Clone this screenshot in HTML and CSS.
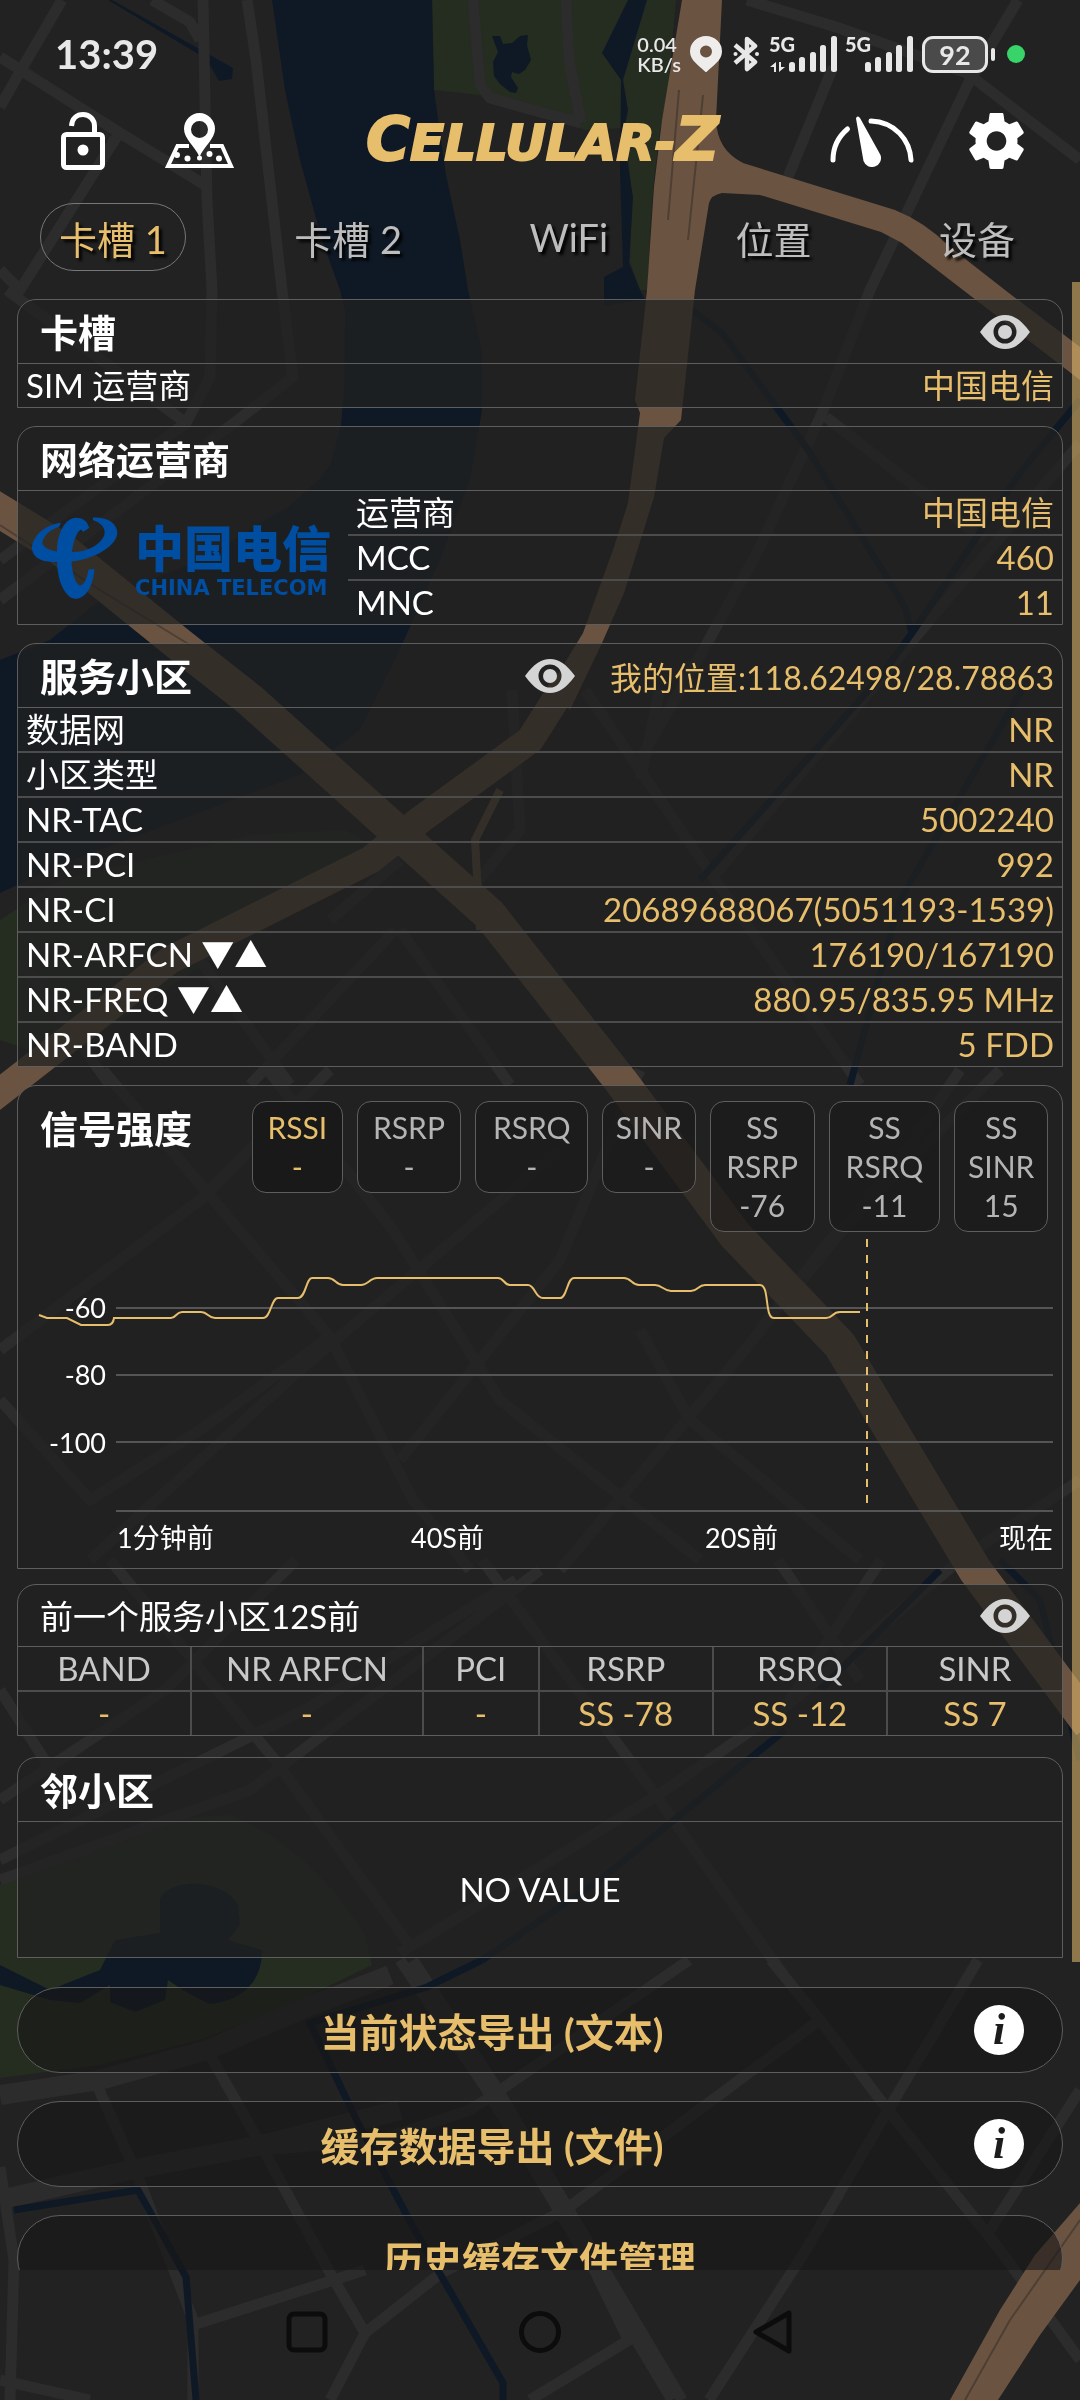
FILE: index.html
```
<!DOCTYPE html>
<html lang="zh-CN">
<head>
    <meta charset="UTF-8">
    <meta name="viewport" content="width=device-width, initial-scale=1.0">
    <title>Cellular-Z</title>
    <link rel="stylesheet" href="styles.css">
</head>
<body>
    <!-- dark city map behind everything -->
    <svg class="map" viewBox="0 0 1080 2400" preserveAspectRatio="xMidYMid slice" aria-hidden="true">
        <g fill="#252c20">
            <path d="M432 0H676L668 90L660 130L654 180L650 230L648 290H640L630 262L632 200L626 128L585 130L540 115L480 95L434 90Z"/>
            <path d="M0 920L60 880L250 835L345 830L380 850L300 900L150 1000L60 1060L0 1040Z"/>
            <path d="M0 1885C80 1850 160 1815 230 1815C290 1840 330 1880 365 1935L372 1965L290 2005L200 2040L100 2065L0 2078Z"/>
        </g>
        <g fill="#0f1926">
            <path d="M272 0L285 90L300 160L322 240L340 290L345 310L344 390L341 425L330 465L318 480L290 505L200 560L100 600L50 640L0 660V893L60 865L180 820L300 775L360 730L395 660L440 560L470 480L482 410V350L468 290L460 240L446 175L434 90L432 0Z"/>
            <path d="M628 0H647L623 80L628 110L625 125L626 153L633 197L629 263L640 290L645 300L604 306V277L623 267L620 170L621 80L602 53Z"/>
            <path d="M492 36L500 36L503 44L512 43L520 36L528 35L527 45L531 60L525 70L519 74L512 72L511 77L518 88L516 93L510 92L500 84L494 76L493 62L498 52Z"/>
            <path d="M112 0L233 68L232 79L219 81L208 62L200 55L108 0Z"/>
            <path d="M0 1965L50 1990L100 1970L115 1940L160 1933V1900C165 1880 220 1875 238 1905L240 1925L228 1940L262 1950C262 1980 245 2000 210 2004C190 1995 175 1985 168 1980L165 2000L135 2012L110 2002V1985L80 2003L50 2000L0 1985Z"/>
        </g>
        <!-- small streets -->
        <g fill="none" stroke="#2c2c2c" stroke-width="11" stroke-linejoin="round">
            <path d="M62 0L21 70L0 107M0 57L120 133L205 185M203 0L207 200L212 290L210 377L186 423L7 290M152 0L190 22L200 40M119 133L20 290L0 270"/>
            <path d="M247 0L256 60L282 290L293 377L234 423L0 600M473 0L480 85L490 98L540 112L581 123M566 0L569 60L581 123M0 560L186 423"/>
            <path d="M747 0L836 27L967 73L1080 160M1018 0L970 80L870 290L822 413L760 547L705 647L640 760M833 67L788 177M826 417L984 540M1080 443L930 620L713 877"/>
            <path d="M512 690L520 830L470 890M585 690L713 877L860 1085M660 690L640 780M400 860L330 920M110 1085L20 960M200 960L290 1085M395 930L250 1085M400 930L510 1085"/>
            <path d="M103 1070L330 1337L413 1500L470 1570M268 1070L393 1230L500 1400L700 1560M0 1350L200 1200L330 1070M90 1560L300 1370L560 1150M400 1460L560 1260L640 1070M0 1400L90 1500L200 1430L330 1337M560 1570L720 1380L900 1160L960 1070"/>
            <path d="M640 1330L690 1420L860 1560M1000 1070L830 1240L760 1330M1080 1480L960 1560L785 1707"/>
            <path d="M785 1707L661 1793L400 1953M516 1580L310 1707L0 1860M296 1560L165 1690L0 1800M110 1560L275 1760L413 1950M482 1560L654 1793L785 1977M881 1560L785 1707M778 1560L860 1680M0 1690L70 1800M540 1570L250 1790L0 1880"/>
            <path d="M207 2050L262 2147L330 2273L365 2333M413 1960L496 2087L682 2400M400 1960L485 2087L672 2400M689 1960L496 2093L470 2110L380 2140L262 2150M820 2020L565 2210L441 2273L365 2333L330 2400M771 1960L820 2020L888 2110L1000 2250L1080 2360M978 1960L888 2110L806 2250L709 2400"/>
            <path d="M138 2177L193 2320V2400M96 2083L138 2177M0 2167L14 2260L10 2400M634 2337L530 2400M565 2210L627 2337M365 2270L193 2325M0 2380L90 2400M1080 2090L990 2230"/>
        </g>
        <g fill="none" stroke="#2c2c2c" stroke-width="20">
            <path d="M0 2095L100 2080L207 2050L300 2010L390 1975M0 2200L130 2170L262 2145L400 2110"/>
        </g>
        <g fill="none" stroke="#0f1926" stroke-width="7">
            <path d="M692 310L722 333L808 450L905 607L912 633M1080 400L1022 470L912 633L880 677L700 880M1022 690L900 900L850 1085"/>
            <path d="M482 1960L427 1987L310 2023L358 2123L413 2227L503 2383V2400M14 2210L138 2190L186 2277L196 2400M785 1730L600 1880L482 1960M1000 1560L1040 1600L1080 1760M940 1570L820 1690"/>
        </g>
        <!-- main roads -->
        <g fill="#6b5341">
            <path d="M682 0H722L716 120Q717 150 743 163L895 210Q925 222 950 247L1005 290L1080 347V380L963 290L902 243L881 232L760 195L722 193Q711 195 709 203L695 290L681 420L664 438L654 497L624 593L602 643L570 710L552 684L583 633L614 547L628 503L640 413L635 400L647 290L654 187L662 120Z"/>
            <path d="M1080 2203L1035 2255L1000 2310L950 2400H998L1040 2335L1080 2280Z"/>
        </g>
        <g fill="none" stroke="#6b5341" stroke-linejoin="round">
            <path stroke-width="28" d="M568 680L530 740L420 820L370 860L170 960L-10 1100"/>
            <path stroke-width="34" d="M-10 505L60 548L180 645L250 700L395 830L490 915L620 1080L735 1235L840 1345L975 1570L1090 1725"/>
            <path stroke-width="8" d="M500 790L475 840L480 930"/>
        </g>
        <path fill="none" stroke="#4d3f33" stroke-width="2" d="M679 90L668 220M703 95L688 240M0 525L100 590L190 645M1080 2220L1010 2320L965 2400"/>
    </svg>

    <svg class="sprite" aria-hidden="true">
        <symbol id="eye" viewBox="0 0 50 34">
            <path fill="#d4d4d4" fill-rule="evenodd" d="M0 17C9 5 16 0 25 0S41 5 50 17C41 29 34 34 25 34S9 29 0 17ZM25 5.500A11.500 11.500 0 1 0 25 28.500A11.500 11.500 0 1 0 25 5.500Z"/>
            <circle cx="25" cy="17" r="7" fill="#d4d4d4"/>
        </symbol>
        <symbol id="bars" viewBox="0 0 67 36">
            <g fill="#e8e8e8">
                <rect x="19" y="26" width="6" height="10" rx="2.500"/>
                <rect x="29" y="21" width="6" height="15" rx="2.500"/>
                <rect x="40" y="16" width="6" height="20" rx="2.500"/>
                <rect x="50" y="9" width="6" height="27" rx="2.500"/>
                <rect x="61" y="0" width="6" height="36" rx="2.500"/>
            </g>
        </symbol>
    </svg>

    <div class="app">
        <div class="status">
            <span class="time">13:39</span>
            <div class="status-icons">
                <span class="speed">0.04<br>KB/s</span>
                <svg width="32" height="36" viewBox="0 0 32 36"><path fill="#efedec" fill-rule="evenodd" d="M16 0A16 15.500 0 0 1 32 15.500C32 25 22 30 16 36.500C10 30 0 25 0 15.500A16 15.500 0 0 1 16 0ZM16 9.500A6 6 0 1 0 16 21.500A6 6 0 1 0 16 9.500Z"/></svg>
                <svg class="bt" width="26" height="36" viewBox="0 0 26 36"><path fill="none" stroke="#e8e8e8" stroke-width="4.500" stroke-linejoin="round" d="M2 9L22 26L14 33V3L22 10L2 27"/><circle cx="2.500" cy="18" r="2" fill="#e8e8e8"/><circle cx="24" cy="18" r="2" fill="#e8e8e8"/></svg>
                <svg class="sim" width="67" height="36" viewBox="0 0 67 36"><use href="#bars"/><text class="net" x="-1" y="16">5G</text><path fill="#e8e8e8" d="M0 31L6 26V36H4V31ZM9 26V36L15 31H11V26Z"/></svg>
                <svg class="sim" width="67" height="36" viewBox="0 0 67 36"><use href="#bars"/><text class="net" x="-1" y="16">5G</text></svg>
                <div class="battery">92</div>
                <span class="mic-dot"></span>
            </div>
        </div>

        <header class="toolbar">
            <div class="tools">
                <button class="icon-btn" aria-label="锁定">
                    <svg width="44" height="58" viewBox="0 0 44 58"><rect x="2.500" y="22.500" width="39" height="33" rx="3" fill="none" stroke="#fff" stroke-width="5"/><path fill="none" stroke="#fff" stroke-width="5" d="M10.500 14C11 6 16 2.500 22 2.500C29 2.500 33.500 8 33.500 14V22"/><circle cx="22" cy="38" r="5.500" fill="#fff"/></svg>
                </button>
                <button class="icon-btn" aria-label="地图">
                    <svg width="70" height="56" viewBox="0 0 70 56">
                        <path fill="none" stroke="#fff" stroke-width="4" d="M24 33H12.500L3 53H66L57 33H45"/>
                        <path fill="#fff" fill-rule="evenodd" d="M34.500 0A15.500 16 0 0 1 50 16C50 26 39 33 34.500 44C30 33 19 26 19 16A15.500 16 0 0 1 34.500 0ZM34.500 8A8.500 8.500 0 1 0 34.500 25A8.500 8.500 0 1 0 34.500 8Z"/>
                        <g fill="#fff"><circle cx="12" cy="42" r="3"/><circle cx="22.500" cy="45.500" r="3"/><circle cx="34.500" cy="45" r="2.500"/><circle cx="44.500" cy="41" r="3"/><circle cx="54" cy="45.500" r="3"/></g>
                    </svg>
                </button>
            </div>
            <h1 class="logo"><span class="cap">C</span>ELLULAR-<span class="cap">Z</span></h1>
            <div class="tools right">
                <button class="icon-btn" aria-label="测速">
                    <svg width="84" height="52" viewBox="0 0 84 52"><path fill="none" stroke="#fff" stroke-width="5" stroke-linecap="round" d="M3 45C3 32 8 22 17.500 14M41 6C65 7 80 25 81 45"/><path fill="#fff" d="M26 3.500Q27 0 30 3L50.500 40A9 9 0 1 1 33.500 46Z"/></svg>
                </button>
                <button class="icon-btn" aria-label="设置">
                    <svg width="55" height="56" viewBox="2.200 2 19.600 20"><path fill="#fff" d="M19.430 12.980c.04-.32.07-.64.07-.98s-.03-.66-.07-.98l2.110-1.650c.19-.15.24-.42.12-.64l-2-3.460c-.12-.22-.39-.3-.61-.22l-2.490 1c-.52-.4-1.080-.73-1.690-.98l-.38-2.650C14.460 2.180 14.250 2 14 2h-4c-.25 0-.46.18-.49.42l-.38 2.650c-.61.25-1.170.59-1.690.98l-2.490-1c-.23-.09-.49 0-.61.22l-2 3.460c-.13.22-.07.49.12.64l2.110 1.650c-.04.32-.07.65-.07.98s.03.66.07.98l-2.110 1.650c-.19.15-.24.42-.12.64l2 3.460c.12.22.39.3.61.22l2.490-1c.52.4 1.080.73 1.690.98l.38 2.650c.03.24.24.42.49.42h4c.25 0 .46-.18.49-.42l.38-2.650c.61-.25 1.170-.59 1.690-.98l2.490 1c.23.09.49 0 .61-.22l2-3.460c.12-.22.07-.49-.12-.64l-2.110-1.650zM12 15.500c-1.930 0-3.500-1.570-3.500-3.500s1.570-3.500 3.500-3.500 3.500 1.570 3.500 3.500-1.570 3.500-3.500 3.500z"/></svg>
                </button>
            </div>
        </header>

        <nav class="tabs">
            <button class="tab active">卡槽 1</button>
            <button class="tab">卡槽 2</button>
            <button class="tab">WiFi</button>
            <button class="tab">位置</button>
            <button class="tab">设备</button>
        </nav>

        <main class="content">
            <section class="panel">
                <div class="panel-head">
                    <h2>卡槽</h2>
                    <button class="icon-btn eye" aria-label="显示"><svg width="50" height="34"><use href="#eye"/></svg></button>
                </div>
                <table class="rows">
                    <tr><th scope="row">SIM 运营商</th><td>中国电信</td></tr>
                </table>
            </section>

            <section class="panel">
                <div class="panel-head"><h2>网络运营商</h2></div>
                <div class="operator">
                    <div class="carrier">
                        <svg width="87" height="84" viewBox="30 48 262 252" aria-hidden="true">
                            <g fill="#004ea2">
                                <path d="M120 68C70 75 33 110 33 145C35 180 75 188 110 186C200 190 285 145 290 100C290 70 262 50 216 52L217 60C240 66 258 85 250 108C235 140 190 158 150 156C110 158 72 150 64 130C66 105 90 88 115 80Z"/>
                                <path d="M165 53C135 55 115 90 109 135C105 190 110 240 130 272C142 290 152 297 166 297C198 294 218 255 221 207L203 209C200 235 188 258 177 257C162 250 153 215 152 180C152 140 165 95 181 88L187 96L205 84C200 62 185 53 165 53Z"/>
                            </g>
                        </svg>
                        <div class="carrier-name">
                            <span class="zh">中国电信</span>
                            <span class="en">CHINA TELECOM</span>
                        </div>
                    </div>
                    <table class="rows">
                        <tr><th scope="row">运营商</th><td>中国电信</td></tr>
                        <tr><th scope="row">MCC</th><td>460</td></tr>
                        <tr><th scope="row">MNC</th><td>11</td></tr>
                    </table>
                </div>
            </section>

            <section class="panel">
                <div class="panel-head">
                    <h2>服务小区</h2>
                    <button class="icon-btn eye-mid" aria-label="显示"><svg width="50" height="34"><use href="#eye"/></svg></button>
                    <span class="position">我的位置:118.62498/28.78863</span>
                </div>
                <table class="rows">
                    <tr><th scope="row">数据网</th><td>NR</td></tr>
                    <tr><th scope="row">小区类型</th><td>NR</td></tr>
                    <tr><th scope="row">NR-TAC</th><td>5002240</td></tr>
                    <tr><th scope="row">NR-PCI</th><td>992</td></tr>
                    <tr><th scope="row">NR-CI</th><td>20689688067(5051193-1539)</td></tr>
                    <tr><th scope="row">NR-ARFCN ▼▲</th><td>176190/167190</td></tr>
                    <tr><th scope="row">NR-FREQ ▼▲</th><td>880.95/835.95 MHz</td></tr>
                    <tr><th scope="row">NR-BAND</th><td>5 FDD</td></tr>
                </table>
            </section>

            <section class="panel signal">
                <div class="signal-head">
                    <h2>信号强度</h2>
                    <div class="chips">
                        <button class="chip active">RSSI<br>-</button>
                        <button class="chip">RSRP<br>-</button>
                        <button class="chip">RSRQ<br>-</button>
                        <button class="chip">SINR<br>-</button>
                        <button class="chip">SS<br>RSRP<br>-76</button>
                        <button class="chip">SS<br>RSRQ<br>-11</button>
                        <button class="chip">SS<br>SINR<br>15</button>
                    </div>
                </div>
                <svg class="chart" viewBox="0 0 1044 336">
                    <path class="grid-line" d="M98 76H1035M98 143H1035M98 210H1035M98 279H1035"/>
                    <path class="now" d="M849 7V272"/>
                    <path class="series" d="M21 83L29 86H49L63 93H90Q95 93 96 86H153C158 86 158 80 164 80H183C190 80 190 86 197 86H245C253 86 253 66 260 66H280C288 66 288 46 294 46H310C317 46 318 53 325 53H343C350 53 352 46 359 46H480C486 46 486 53 492 53H510C517 53 517 66 525 66H542C549 66 549 46 556 46H606C613 46 614 53 621 53H637C644 53 646 59 653 59H673C680 59 680 53 687 53H742C752 53 746 86 756 86H808C815 86 814 80 822 80H842"/>
                    <g class="axis" text-anchor="end">
                        <text x="88" y="86">-60</text>
                        <text x="88" y="153">-80</text>
                        <text x="88" y="221">-100</text>
                    </g>
                    <g class="axis">
                        <text x="99" y="316">1分钟前</text>
                        <text x="393" y="316">40S前</text>
                        <text x="687" y="316">20S前</text>
                        <text x="1035" y="316" text-anchor="end">现在</text>
                    </g>
                </svg>
            </section>

            <section class="panel previous">
                <div class="panel-head">
                    <h2 class="light">前一个服务小区12S前</h2>
                    <button class="icon-btn eye" aria-label="显示"><svg width="50" height="34"><use href="#eye"/></svg></button>
                </div>
                <table class="cells">
                    <tr><th>BAND</th><th class="wide">NR ARFCN</th><th class="narrow">PCI</th><th>RSRP</th><th>RSRQ</th><th>SINR</th></tr>
                    <tr><td>-</td><td>-</td><td>-</td><td>SS -78</td><td>SS -12</td><td>SS 7</td></tr>
                </table>
            </section>

            <section class="panel">
                <div class="panel-head"><h2>邻小区</h2></div>
                <p class="empty">NO VALUE</p>
            </section>

            <div class="exports">
                <div class="export">
                    <button class="export-btn">当前状态导出 (文本)</button>
                    <button class="info" aria-label="说明">i</button>
                </div>
                <div class="export">
                    <button class="export-btn">缓存数据导出 (文件)</button>
                    <button class="info" aria-label="说明">i</button>
                </div>
                <div class="export">
                    <button class="export-btn">历史缓存文件管理</button>
                </div>
            </div>
            <div class="scrollbar"></div>
        </main>

        <footer class="navbar">
            <button class="icon-btn" aria-label="最近任务"><svg width="42" height="44" viewBox="0 0 42 44"><rect x="3" y="4" width="36" height="36" rx="5" fill="none" stroke="#0c0c0c" stroke-width="5"/></svg></button>
            <button class="icon-btn" aria-label="主页"><svg width="42" height="44" viewBox="0 0 42 44"><circle cx="21" cy="22" r="18.500" fill="none" stroke="#0c0c0c" stroke-width="5"/></svg></button>
            <button class="icon-btn" aria-label="返回"><svg width="42" height="44" viewBox="0 0 42 44"><path d="M37 3V41L4 22Z" fill="none" stroke="#0c0c0c" stroke-width="5" stroke-linejoin="round"/></svg></button>
        </footer>
    </div>
</body>
</html>
```
FILE: styles.css
```
* {
    box-sizing: border-box;
}
body {
    margin: 0;
    background: #222;
    color: #fff;
    font-family: Lato, "Noto Sans CJK SC", sans-serif;
    font-size: 33px;
}
button {
    font: inherit;
    color: inherit;
    background: none;
    border: none;
    padding: 0;
    cursor: pointer;
}
svg {
    display: block;
}
h1, h2, p {
    margin: 0;
}
.map {
    position: fixed;
    inset: 0;
    width: 100%;
    height: 100%;
    z-index: -1;
}
.sprite {
    position: absolute;
    width: 0;
    height: 0;
}
.app {
    display: flex;
    flex-direction: column;
    height: 100vh;
}

/* status bar */
.status {
    display: flex;
    justify-content: space-between;
    align-items: center;
    height: 108px;
    padding: 0 55px;
    color: #e8e8e8;
}
.time {
    font-size: 40px;
    font-weight: 700;
}
.status-icons {
    display: flex;
    align-items: center;
    gap: 9px;
}
.speed {
    font-size: 20px;
    line-height: 20px;
    font-weight: 600;
}
.bt {
    margin: 0 2px;
}
.sim {
    overflow: visible;
}
.net {
    font-size: 20px;
    font-weight: 900;
    fill: #e8e8e8;
}
.battery {
    position: relative;
    width: 66px;
    height: 37px;
    border: 3px solid #e8e8e8;
    border-radius: 11px;
    background: #4a4a4a;
    text-align: center;
    font-size: 27px;
    line-height: 31px;
    font-weight: 700;
    margin-right: 10px;
}
.battery::after {
    content: "";
    position: absolute;
    right: -10px;
    top: 9px;
    width: 4px;
    height: 13px;
    border-radius: 2px;
    background: #e8e8e8;
}
.mic-dot {
    width: 18px;
    height: 18px;
    border-radius: 50%;
    background: #38d369;
}

/* toolbar */
.toolbar {
    display: flex;
    align-items: center;
    height: 66px;
    padding: 0 56px 0 61px;
}
.tools {
    flex: 1;
    display: flex;
    align-items: center;
    gap: 60px;
}
.tools.right {
    justify-content: flex-end;
    gap: 55px;
}
.logo {
    color: #e7be6b;
    font-family: "DejaVu Sans", sans-serif;
    font-style: italic;
    font-weight: 700;
    font-size: 50px;
    line-height: 60px;
    -webkit-text-stroke: 2px #e7be6b;
}
.logo .cap {
    font-size: 60px;
}

/* tabs */
.tabs {
    display: flex;
    justify-content: space-between;
    padding: 29px 46px 11px 40px;
}
.tab {
    height: 68px;
    padding: 0 18px;
    border: 1px solid transparent;
    border-radius: 34px;
    font-size: 38px;
    color: #bdbdbd;
    text-shadow: 3px 3px 3px #000;
}
.tab.active {
    color: #e7be6b;
    border-color: #777;
}

/* scrolling content */
.content {
    position: relative;
    flex: 1;
    min-height: 0;
    overflow: hidden;
    padding: 17px 17px 0;
}
.scrollbar {
    position: absolute;
    top: 0;
    right: 0;
    width: 8px;
    height: 1680px;
    background: rgba(231, 190, 107, 0.55);
}
.panel {
    border: 1px solid #5e5e5e;
    border-radius: 19px 19px 0 0;
    background: rgba(34, 34, 34, 0.75);
    margin-bottom: 18px;
}
.panel-head {
    display: flex;
    align-items: center;
    height: 64px;
    padding: 0 8px 0 22px;
    border-bottom: 1px solid #5e5e5e;
}
h2 {
    flex: 1;
    font-size: 38px;
    font-weight: 700;
    line-height: 64px;
}
h2.light {
    font-size: 33px;
    font-weight: 400;
}
.eye {
    margin-right: 24px;
}
.eye-mid {
    margin-right: 35px;
}
.position {
    color: #e7be6b;
    font-size: 32px;
}
.rows {
    width: 100%;
    border-spacing: 0;
    line-height: 43px;
}
.rows th, .rows td {
    padding: 0 8px;
    border-bottom: 2px solid #4c4c4c;
    font-weight: 400;
    text-align: left;
}
.rows td {
    color: #e7be6b;
    text-align: right;
}
.rows tr:last-child th, .rows tr:last-child td {
    border-bottom: none;
}
.operator {
    display: grid;
    grid-template-columns: 330px 1fr;
}
.carrier {
    display: flex;
    align-items: center;
    gap: 17px;
    padding-left: 13px;
    color: #004ea2;
}
.carrier-name {
    display: flex;
    flex-direction: column;
}
.zh {
    font-size: 49px;
    font-weight: 900;
    line-height: 60px;
}
.en {
    font-family: "DejaVu Sans", sans-serif;
    font-size: 21px;
    font-weight: 700;
    line-height: 20px;
    white-space: nowrap;
}

/* signal chart */
.signal {
    margin-bottom: 15px;
}
.signal-head {
    display: flex;
    padding: 15px 14px 0 22px;
}
.signal-head h2 {
    line-height: 54px;
}
.chips {
    flex: 0 0 796px;
    display: grid;
    grid-template-columns: 90fr 104fr 112fr 93fr 104fr 111fr 93fr;
    gap: 14px;
    align-items: start;
}
.chip {
    padding: 6px 0;
    border: 1px solid #5e5e5e;
    border-radius: 14px;
    background: rgba(24, 24, 24, 0.5);
    color: #b4b4b4;
    font-size: 30px;
    line-height: 39px;
}
.chip.active {
    background: #191919;
    color: #e7be6b;
}
.chart {
    width: 100%;
}
.grid-line {
    stroke: #555;
    stroke-width: 2;
}
.now {
    stroke: #e7be6b;
    stroke-width: 2;
    stroke-dasharray: 8 8;
}
.series {
    fill: none;
    stroke: #e7be6b;
    stroke-width: 2;
}
.axis {
    fill: #fff;
    font-size: 27px;
}

/* previous cell */
.previous {
    margin-bottom: 21px;
}
.previous .panel-head {
    height: 62px;
}
.cells {
    width: 100%;
    table-layout: fixed;
    border-spacing: 0;
    line-height: 43px;
    text-align: center;
}
.cells th {
    font-weight: 400;
    color: #c8c8c8;
    border-bottom: 2px solid #4c4c4c;
}
.cells td {
    color: #e7be6b;
}
.cells th, .cells td {
    padding: 0;
    border-right: 2px solid #4c4c4c;
}
.cells th:last-child, .cells td:last-child {
    border-right: none;
}
.wide {
    width: 22.2%;
}
.narrow {
    width: 11.1%;
}
.empty {
    line-height: 135px;
    text-align: center;
}

/* export buttons */
.exports {
    display: flex;
    flex-direction: column;
    gap: 28px;
    padding-top: 11px;
}
.export {
    display: flex;
    align-items: center;
    height: 86px;
    border: 1px solid #5e5e5e;
    border-radius: 43px;
    background: rgba(24, 24, 24, 0.6);
}
.export-btn {
    flex: 1;
    height: 100%;
    color: #e7be6b;
    font-size: 39px;
    font-weight: 700;
}
.info {
    width: 50px;
    height: 50px;
    margin: 0 38px 0 8px;
    border-radius: 50%;
    background: #fff;
    color: #1c1c1c;
    font-family: "Liberation Serif", serif;
    font-style: italic;
    font-weight: 700;
    font-size: 44px;
    line-height: 48px;
}

/* system navigation */
.navbar {
    display: flex;
    justify-content: center;
    gap: 191px;
    height: 130px;
    padding-top: 40px;
    align-items: flex-start;
}
```
